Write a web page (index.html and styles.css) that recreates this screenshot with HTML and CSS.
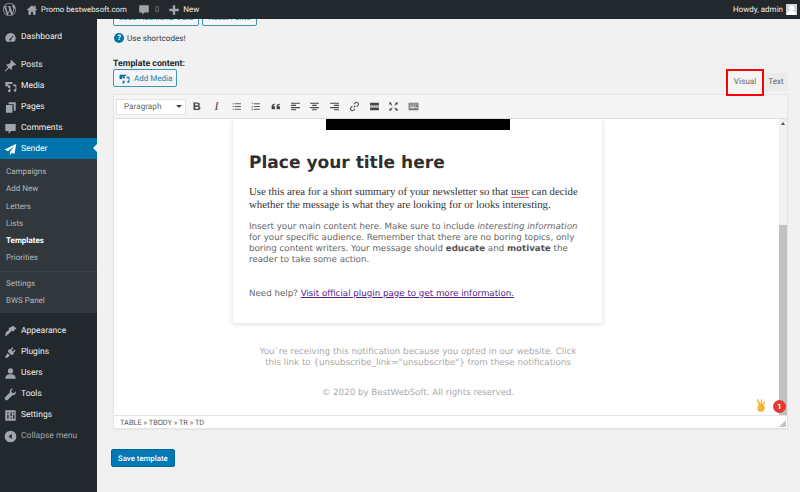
FILE: index.html
```html
<!DOCTYPE html>
<html lang="en">
<head>
    <meta charset="UTF-8">
    <meta name="viewport" content="width=device-width, initial-scale=1.0">
    <title>Edit template</title>
    <link rel="stylesheet" href="styles.css">
</head>
<body>
    <!-- top admin bar -->
    <header class="adminbar">
        <svg class="bar_logo" viewBox="0 0 20 20"><path d="M20 10c0-5.510-4.490-10-10-10C4.480 0 0 4.490 0 10c0 5.520 4.480 10 10 10 5.510 0 10-4.480 10-10zM7.780 15.370L4.370 6.220c.55-.02 1.170-.08 1.170-.08.50-.06.44-1.130-.06-1.110 0 0-1.450.11-2.370.11-.18 0-.37 0-.58-.01C4.120 2.690 6.870 1.110 10 1.110c2.330 0 4.450.87 6.050 2.340-.68-.11-1.650.39-1.650 1.580 0 .74.45 1.360.90 2.100.35.61.55 1.360.55 2.460 0 1.490-1.400 5-1.400 5l-3.030-8.370c.54-.02.82-.17.82-.17.50-.05.44-1.250-.06-1.220 0 0-1.440.12-2.380.12-.87 0-2.330-.12-2.330-.12-.50-.03-.56 1.200-.06 1.220l.92.08 1.260 3.410zM17.410 10c.24-.64.74-1.870.43-4.250.70 1.290 1.050 2.710 1.050 4.250 0 3.290-1.730 6.240-4.400 7.780.97-2.590 1.940-5.200 2.920-7.780zM6.100 18.090C3.120 16.650 1.110 13.530 1.110 10c0-1.300.23-2.480.72-3.590C3.250 10.300 4.670 14.200 6.100 18.090zm4.030-6.630l2.580 6.980c-.86.29-1.750.45-2.710.45-.79 0-1.570-.11-2.290-.33.81-2.380 1.620-4.730 2.420-7.100z" fill="#a0a5aa"/></svg>
        <svg class="bar_icon" viewBox="0 0 20 20"><path d="M10 2L1 10h3v8h4.500v-5h3v5H16v-8h3l-3-2.700V3h-2.500v2.100z" fill="#a0a5aa"/></svg>
        <span class="bar_text site">Promo bestwebsoft.com</span>
        <svg class="bar_icon bubble" viewBox="0 0 20 20"><path d="M2 2h16v12h-7l-4 4v-4H2z" fill="#a0a5aa"/></svg>
        <span class="bar_text dim">0</span>
        <svg class="bar_icon plus" viewBox="0 0 20 20"><path d="M8 2h4v6h6v4h-6v6H8v-6H2V8h6z" fill="#a0a5aa"/></svg>
        <span class="bar_text">New</span>
        <span class="bar_text howdy">Howdy, admin</span>
        <svg class="avatar" viewBox="0 0 11 11"><rect width="11" height="11" fill="#d4d4d4"/><circle cx="5.500" cy="4" r="2.600" fill="#fff"/><path d="M1 11c0-3.500 2-4.500 4.500-4.500S10 7.500 10 11z" fill="#fff"/></svg>
    </header>

    <div class="wrap">
        <!-- left menu -->
        <nav class="sidemenu">
            <a class="menu_item gap_after">
                <svg viewBox="0 0 20 20"><path d="M10 3a8 8 0 0 0-8 8c0 2.300 1 4.300 2.500 5.700h11A8 8 0 0 0 10 3zm0 8.500L13.500 7l1 .8-3.400 4.500A1.500 1.500 0 1 1 10 11.500z" fill="#a0a5aa"/></svg>
                Dashboard
            </a>
            <a class="menu_item">
                <svg viewBox="0 0 20 20"><path d="M11 1l8 8-2 1-1.500-.8L12 12.500c.5 2 .2 3.500-.8 4.500L8 13.800 2.500 19 1 19.300 1.300 18 6.500 12.300 3 9c1-1 2.500-1.300 4.500-.8l3.300-3.500L10 3z" fill="#a0a5aa"/></svg>
                Posts
            </a>
            <a class="menu_item">
                <svg viewBox="0 0 20 20"><path d="M2 3h11v3H9.500a2.500 2.500 0 0 0-3 3.500H2zm6 5a2.300 2.300 0 1 1 0 4.600A2.300 2.300 0 0 1 8 8zm6-1h5v9a2 2 0 1 1-1.500-2V9.500H14zM7 14l3-1v4a2 2 0 1 1-1.500-2v-.5z" fill="#a0a5aa"/></svg>
                Media
            </a>
            <a class="menu_item">
                <svg viewBox="0 0 20 20"><path d="M7 2h11v13h-3V5H7zM3 6h10v12H3z" fill="#a0a5aa"/></svg>
                Pages
            </a>
            <a class="menu_item">
                <svg viewBox="0 0 20 20"><path d="M2 3h16v11h-7l-4 4v-4H2z" fill="#a0a5aa"/></svg>
                Comments
            </a>
            <a class="menu_item current">
                <svg viewBox="0 0 20 20"><path d="M19 1L1 10l5 2.500L16 5l-7 9v5l3-4 4 2z" fill="#fff"/></svg>
                Sender
            </a>
            <div class="submenu">
                <a>Campaigns</a>
                <a>Add New</a>
                <a>Letters</a>
                <a>Lists</a>
                <a class="on">Templates</a>
                <a>Priorities</a>
                <div class="sub_line"></div>
                <a>Settings</a>
                <a>BWS Panel</a>
            </div>
            <a class="menu_item first_after">
                <svg viewBox="0 0 20 20"><path d="M14 1l5 4-5 5-2-1-5 5c-1 1-3 3-6 3 2-2 1-4 2-6l5-4-1-2z" fill="#a0a5aa"/></svg>
                Appearance
            </a>
            <a class="menu_item">
                <svg viewBox="0 0 20 20"><path d="M13 2l1.500 1.500-3 3 2 2 3-3L18 7l-3 3-.5 3-3.500 1-5-5 1-3.500 3-.5zM5.500 11l3.500 3.500L5 18l-3 .500.500-3z" fill="#a0a5aa"/></svg>
                Plugins
            </a>
            <a class="menu_item">
                <svg viewBox="0 0 20 20"><circle cx="10" cy="6" r="4" fill="#a0a5aa"/><path d="M2 18c0-5 3-7 8-7s8 2 8 7z" fill="#a0a5aa"/></svg>
                Users
            </a>
            <a class="menu_item">
                <svg viewBox="0 0 20 20"><path d="M18 5l-3 3-3-1-1-3 3-3c-3-.500-6 2-5 6L2 14a2.500 2.500 0 0 0 4 4l7-7c4 1 6-3 5-6z" fill="#a0a5aa"/></svg>
                Tools
            </a>
            <a class="menu_item">
                <svg viewBox="0 0 20 20"><path fill-rule="evenodd" d="M2 2h16v16H2zM5 5v2h2V5zm0 4v6h2V9zm5-4v6h2V5zm0 8v2h2v-2zm4-8v2h2V5zm0 4v6h2V9z" fill="#a0a5aa"/></svg>
                Settings
            </a>
            <a class="menu_item collapse">
                <svg viewBox="0 0 20 20"><path fill-rule="evenodd" d="M10 1a9 9 0 1 1 0 18 9 9 0 0 1 0-18zm2 5L7 10l5 4z" fill="#a0a5aa"/></svg>
                Collapse menu
            </a>
        </nav>

        <main class="content">
            <!-- this row is cut by the admin bar, page is scrolled -->
            <div class="clip_row">
                <button class="btn">Load Additional Data</button>
                <button class="btn">Reset Fonts</button>
            </div>
            <div class="hint">
                <span class="hint_icon">?</span>
                Use shortcodes!
            </div>
            <div class="label">Template content:</div>
            <div class="editor_head">
                <button class="btn media_btn">
                    <svg viewBox="0 0 20 20"><path fill-rule="evenodd" d="M1 3h12v2.500H9a2.500 2.500 0 0 0-3 3.500V11H1zm6 3h2a2 2 0 1 1-2 2zM14 7h5v9a2 2 0 1 1-1.500-2V9.500H14zM7 14l3-1v4a2 2 0 1 1-1.500-2v-.5z" fill="#0071a1"/></svg>
                    Add Media
                </button>
                <div class="tabs">
                    <span class="tab visual">Visual</span>
                    <span class="tab">Text</span>
                </div>
            </div>

            <div class="editor">
                <div class="toolbar">
                    <div class="format_select">Paragraph<i></i></div>
                    <span class="tool t_bold">B</span>
                    <span class="tool t_ital">I</span>
                    <svg class="tool_svg" viewBox="0 0 20 20"><path d="M3 4h2v2H3zm4 0h11v2H7zM3 9h2v2H3zm4 0h11v2H7zM3 14h2v2H3zm4 0h11v2H7z" fill="#555d66"/></svg>
                    <svg class="tool_svg" viewBox="0 0 20 20"><path d="M3 3h2v3H4V4H3zm4 1h11v2H7zM3 9h2v1l-1 1h1v1H3v-1l1-1H3zm4 0h11v2H7zM3 14h2v3H3v-1h1v-.3H3v-.4h1V15H3zm4 0h11v2H7z" fill="#555d66"/></svg>
                    <svg class="tool_svg" viewBox="0 0 20 20"><path d="M9 5v2c-2 0-3 1-3 2.500h3V15H3V9.500C3 7 5 5 9 5zm9 0v2c-2 0-3 1-3 2.500h3V15h-6V9.500C12 7 14 5 18 5z" fill="#444"/></svg>
                    <svg class="tool_svg" viewBox="0 0 20 20"><path d="M2 3h16v2H2zm0 4h9v2H2zm0 4h16v2H2zm0 4h9v2H2z" fill="#444"/></svg>
                    <svg class="tool_svg" viewBox="0 0 20 20"><path d="M2 3h16v2H2zm4 4h8v2H6zm-4 4h16v2H2zm4 4h8v2H6z" fill="#444"/></svg>
                    <svg class="tool_svg" viewBox="0 0 20 20"><path d="M2 3h16v2H2zm7 4h9v2H9zm-7 4h16v2H2zm7 4h9v2H9z" fill="#444"/></svg>
                    <svg class="tool_svg" viewBox="0 0 20 20"><path d="M8.500 11.500l3-3M9 5.500l2-2a3.500 3.500 0 0 1 5 5l-2 2M11 14.500l-2 2a3.500 3.500 0 0 1-5-5l2-2" fill="none" stroke="#555" stroke-width="2"/></svg>
                    <svg class="tool_svg" viewBox="0 0 20 20"><path d="M2 3h16v5H2zm0 6.500h3v1H2zm4.500 0h3v1h-3zm4.500 0h3v1h-3zm4.500 0H18v1h-2.500zM2 12h16v5H2z" fill="#444"/></svg>
                    <svg class="tool_svg" viewBox="0 0 20 20"><path d="M2 2l5 1.500L5.500 5 8 7.500 7 8.500 4.500 6 3 7.500zm16 0l-1.500 5.500L15 6l-2.500 2.500-1-1L14 5l-1.500-1.500zM2 18l1.500-5.500L5 14l2.500-2.500 1 1L6 15l1.500 1.500zm16 0l-5.500-1.500L14 15l-2.500-2.500 1-1L15 14l1.500-1.500z" fill="#444"/></svg>
                    <svg class="tool_svg" viewBox="0 0 20 20"><path fill-rule="evenodd" d="M1 3h18v14H1zm2 2v1h14V5zm0 3v2h2V8zm3 0v2h2V8zm3 0v2h2V8zm3 0v2h2V8zM3 11v2h2v-2zm3 0v2h5v-2zm6 0v2h2v-2zm3 0v2h2v-2z" fill="#777"/></svg>
                </div>

                <div class="frame">
                    <div class="frame_inner">
                        <div class="mail_card">
                            <div class="mail_image"></div>
                            <h1>Place your title here</h1>
                            <p class="summary">Use this area for a short summary of your newsletter so that <u>user</u> can decide whether the message is what they are looking for or looks interesting.</p>
                            <p class="body_text">Insert your main content here. Make sure to include <em>interesting information</em> for your specific audience. Remember that there are no boring topics, only boring content writers. Your message should <b>educate</b> and <b>motivate</b> the reader to take some action.</p>
                            <p class="body_text help">Need help? <a>Visit official plugin page to get more information.</a></p>
                        </div>
                        <p class="mail_foot">You`re receiving this notification because you opted in our website. Click this link to {unsubscribe_link="unsubscribe"} from these notifications</p>
                        <p class="mail_copy">© 2020 by BestWebSoft. All rights reserved.</p>
                    </div>
                    <div class="scrollbar">
                        <span class="arrow"></span>
                        <div class="thumb"></div>
                    </div>
                    <svg class="emoji" viewBox="0 0 10 13"><path d="M2.800 6.500L1 .9c-.2-.8 1-1.200 1.300-.4L4.300 5 5 .8c.1-.8 1.400-.7 1.300.2L5.900 5.300 8 2.800c.5-.6 1.500 0 1 .7L7.500 6.200 8.700 8c.2 2.500-1.200 4.800-3.700 4.800-2.400 0-3.800-1.700-3.600-4.100.1-.9.6-1.800 1.400-2.200z" fill="#f5b32f"/></svg>
                    <span class="badge">1</span>
                </div>

                <div class="statusbar">
                    TABLE » TBODY » TR » TD
                    <svg class="grip" viewBox="0 0 8 8"><path d="M8 0v8H0z" fill="#c3c4c7"/></svg>
                </div>
            </div>

            <button class="save">Save template</button>
        </main>
    </div>
</body>
</html>
```

FILE: styles.css
```css
* {
    box-sizing: border-box;
    text-rendering: geometricPrecision;
}
html, body {
    height: 100%;
    margin: 0;
    overflow: hidden;
}
body {
    background: #f1f1f1;
    color: #444;
    font-family: Roboto, sans-serif;
    font-size: 8px;
}

/* admin bar */
.adminbar {
    display: flex;
    align-items: center;
    height: 19px;
    padding: 0 1px 0 3px;
    background: #23282d;
    color: #eee;
}
.bar_logo {
    width: 13px;
    height: 13px;
    margin-right: 10px;
}
.bar_icon {
    width: 12px;
    height: 12px;
    margin-right: 3px;
}
.site {
    font-size: 7.800px;
}
.bubble {
    margin-left: 11px;
    margin-right: 5px;
}
.plus {
    margin-left: 9px;
    margin-right: 3px;
}
.bar_text.dim {
    color: #7d8287;
}
.howdy {
    margin-left: auto;
    margin-right: 3px;
}
.avatar {
    width: 11px;
    height: 11px;
    margin-right: 2px;
}

.wrap {
    display: flex;
    height: 473px;
}

/* left menu */
.sidemenu {
    flex: none;
    width: 97px;
    background: #23282d;
    padding-top: 7px;
}
.menu_item {
    display: flex;
    align-items: center;
    height: 21px;
    padding: 1px 0 0 4px;
    color: #eee;
    font-size: 8.500px;
    position: relative;
}
.menu_item svg {
    width: 13px;
    height: 13px;
    margin-right: 4px;
}
.gap_after {
    margin-bottom: 7px;
}
.current {
    background: #0073aa;
    color: #fff;
}
/* little arrow pointing at the page */
.current::after {
    content: "";
    position: absolute;
    right: 0;
    top: 6px;
    border: 4.5px solid transparent;
    border-right-color: #f1f1f1;
    border-left-width: 0;
}
.submenu {
    background: #32373c;
    padding: 4px 0 4px;
}
.submenu a {
    display: block;
    height: 17.3px;
    line-height: 17px;
    padding-left: 6px;
    color: #b4b9be;
    font-size: 8px;
}
.submenu a.on {
    color: #fff;
    font-weight: 700;
}
.sub_line {
    height: 1px;
    margin: 4px 0 3px;
    background: #3e4348;
}
.first_after {
    margin-top: 7px;
}
.collapse {
    color: #a0a5aa;
}

/* page */
.content {
    flex: 1;
    min-width: 0;
    padding-left: 16px;
    padding-right: 12px;
}
.clip_row {
    display: flex;
    align-items: flex-end;
    gap: 3px;
    height: 7px;
    overflow: hidden;
}
.btn {
    flex: none;
    height: 17px;
    padding: 0 5px;
    border: 1px solid #3f93b8;
    border-radius: 2px;
    background: #f3f5f6;
    color: #1f82ab;
    font: 8px Roboto, sans-serif;
}
.hint {
    display: flex;
    align-items: center;
    height: 12px;
    margin-top: 6px;
    padding-left: 1px;
    color: #32373c;
    font-size: 8.100px;
}
.hint_icon {
    width: 10px;
    height: 10px;
    margin-right: 3px;
    border-radius: 50%;
    background: #0073aa;
    color: #fff;
    font-size: 7.500px;
    font-weight: 700;
    line-height: 10px;
    text-align: center;
}
.label {
    margin-top: 16px;
    color: #23282d;
    font-size: 8.800px;
    font-weight: 700;
    line-height: 9px;
}
.editor_head {
    display: flex;
    justify-content: space-between;
    align-items: flex-end;
    height: 25px;
}
.media_btn {
    display: flex;
    align-items: center;
    align-self: flex-start;
    height: 18px;
    padding: 0 4px 0 5px;
}
.media_btn svg {
    width: 11px;
    height: 11px;
    margin-right: 4px;
}
.tabs {
    display: flex;
    align-items: flex-end;
}
.tab {
    width: 24px;
    height: 18px;
    margin-bottom: 3px;
    background: #ebebeb;
    color: #666;
    font-size: 8.200px;
    line-height: 18px;
    text-align: center;
}
/* red marker around the active tab */
.tab.visual {
    position: relative;
    z-index: 1;
    width: 38px;
    height: 27px;
    margin-bottom: -2px;
    border: 2px solid #f00;
    background: #f5f5f5;
    line-height: 23px;
}
.editor {
    border: 1px solid #e5e5e5;
    border-top-width: 0;
    background: #fff;
    box-shadow: 0 1px 1px rgba(0, 0, 0, 0.04);
}
.toolbar {
    display: flex;
    align-items: center;
    height: 25px;
    padding-left: 2px;
    background: #f5f5f5;
    border-top: 1px solid #e5e5e5;
    border-bottom: 1px solid #ddd;
}
.format_select {
    display: flex;
    align-items: center;
    justify-content: space-between;
    flex: none;
    width: 70px;
    height: 16px;
    margin-right: 1px;
    padding: 0 3px 0 7px;
    background: #fff;
    border: 1px solid #e3e3e3;
    color: #666;
    font-size: 8.200px;
}
.format_select i {
    border: 3px solid transparent;
    border-top: 3.500px solid #444;
    border-bottom-width: 0;
}
.tool {
    flex: none;
    width: 19.700px;
    color: #444;
    font-size: 11px;
    text-align: center;
}
.t_bold {
    font-family: "Liberation Sans", sans-serif;
    font-weight: 700;
}
.t_ital {
    font-family: "Liberation Serif", serif;
    font-style: italic;
    font-size: 12px;
}
.tool_svg {
    flex: none;
    width: 11px;
    height: 11px;
    margin: 0 4.350px;
}
.frame {
    position: relative;
    display: flex;
    height: 296px;
    overflow: hidden;
}
.frame_inner {
    flex: 1;
    min-width: 0;
}
.mail_card {
    width: 369px;
    height: 204px;
    margin-left: 119px;
    padding: 0 16px;
    background: #fff;
    box-shadow: 0 1px 5px rgba(0, 0, 0, 0.15);
}
.mail_image {
    width: 184px;
    height: 11px;
    margin: 0 auto;
    background: #000;
}
.mail_card h1 {
    margin: 22px 0 0;
    color: #2f2f2f;
    font-family: "DejaVu Sans", sans-serif;
    font-size: 17.050px;
    font-weight: 700;
    line-height: 22px;
}
.summary {
    margin: 12px 0 0;
    color: #333;
    font-family: "Liberation Serif", serif;
    font-size: 10.850px;
    line-height: 13px;
}
.summary u {
    text-decoration-color: #ee5a80;
    text-decoration-thickness: 1px;
    text-underline-offset: 2px;
}
.body_text {
    margin: 10px 0 0;
    color: #666;
    font-family: "DejaVu Sans", sans-serif;
    font-size: 8.700px;
    line-height: 11px;
}
.body_text b {
    color: #555;
}
.help {
    margin-top: 23px;
}
.help a {
    color: #551a8b;
    text-decoration: underline;
}
.mail_foot {
    width: 330px;
    margin: 24px 0 0 139px;
    color: #aaa;
    font-family: "DejaVu Sans", sans-serif;
    font-size: 8.700px;
    line-height: 11px;
    text-align: center;
}
.mail_copy {
    width: 330px;
    margin: 19px 0 0 139px;
    color: #aaa;
    font-family: "DejaVu Sans", sans-serif;
    font-size: 8.700px;
    line-height: 11px;
    text-align: center;
}
.scrollbar {
    flex: none;
    width: 8px;
    display: flex;
    flex-direction: column;
    justify-content: space-between;
    background: #f1f1f1;
}
.arrow {
    margin: 3px auto 0;
    border: 2.500px solid transparent;
    border-bottom: 3px solid #505050;
    border-top-width: 0;
}
.thumb {
    height: 190px;
    background: #c1c1c1;
}
.emoji {
    position: absolute;
    right: 21px;
    bottom: 3px;
    width: 10px;
    height: 13px;
}
.badge {
    position: absolute;
    right: 1px;
    bottom: 2px;
    width: 13px;
    height: 13px;
    border-radius: 50%;
    background: #e53935;
    color: #fff;
    font-size: 7.500px;
    font-weight: 700;
    line-height: 13px;
    text-align: center;
}
.statusbar {
    position: relative;
    height: 13px;
    padding-left: 6px;
    border-top: 1px solid #e5e5e5;
    color: #555;
    font-size: 7.400px;
    line-height: 13px;
}
.grip {
    position: absolute;
    right: 1px;
    bottom: 1px;
    width: 7px;
    height: 7px;
}
.save {
    display: block;
    height: 18px;
    margin: 20px 0 0 -2px;
    padding: 0 6px;
    border: 1px solid #006799;
    border-radius: 2px;
    background: #0079b4;
    color: #fff;
    font: 500 7.800px Roboto, sans-serif;
}
```
